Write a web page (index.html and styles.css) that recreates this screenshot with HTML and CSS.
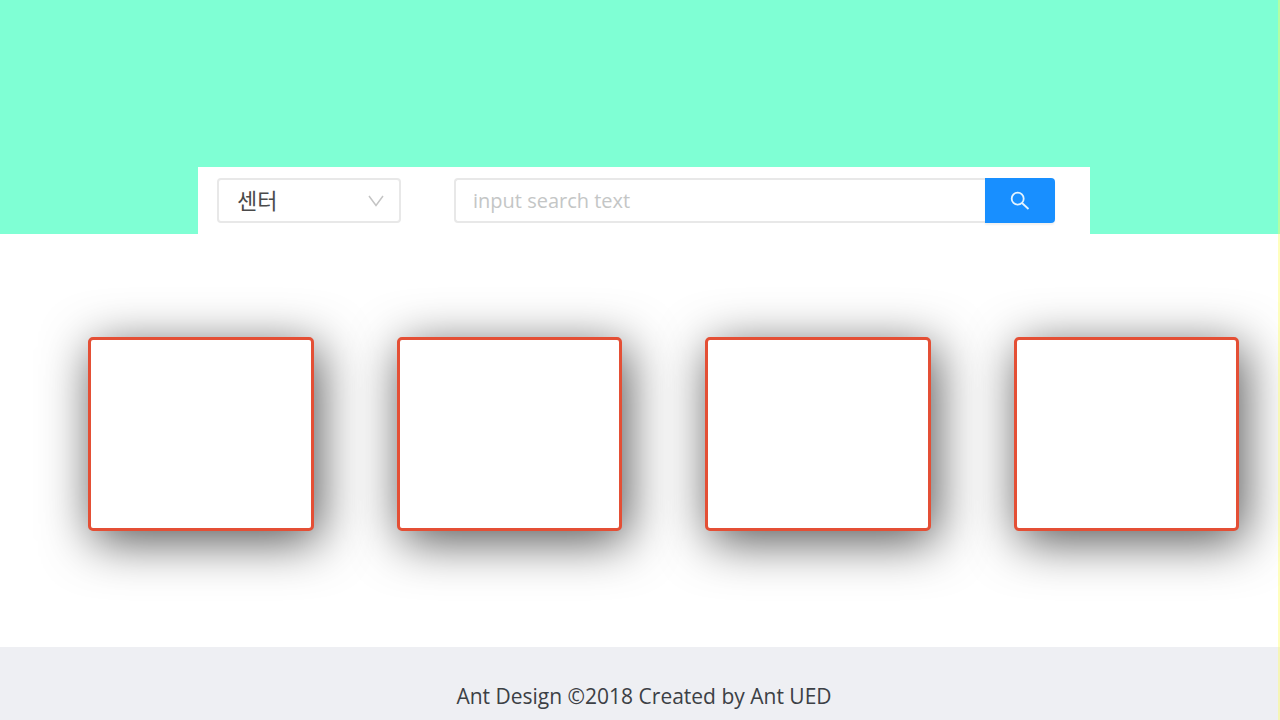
FILE: index.html
```html
<!DOCTYPE html>
<html lang="ko">
<head>
<meta charset="utf-8">
<meta name="viewport" content="width=device-width, initial-scale=1">
<title>센터</title>
<link rel="stylesheet" href="styles.css">
</head>
<body>
<div class="page">
  <header class="banner">
    <form class="search-bar" role="search">
      <div class="picker">
        <select class="picker-select" aria-label="센터">
          <option>센터</option>
        </select>
        <svg class="picker-arrow" viewBox="0 0 16 12" aria-hidden="true"><path d="M1 1 8 10.500 15 1"/></svg>
      </div>
      <div class="search">
        <input class="search-input" type="text" placeholder="input search text" aria-label="input search text">
        <button class="search-button" type="button" aria-label="Search">
          <svg class="search-icon" viewBox="0 0 20 20" aria-hidden="true"><circle cx="7.700" cy="7.700" r="6"/><path d="m12 12 6.500 6"/></svg>
        </button>
      </div>
    </form>
  </header>
  <main class="cards">
    <article class="card"></article>
    <article class="card"></article>
    <article class="card"></article>
    <article class="card"></article>
  </main>
  <footer class="footer">Ant Design ©2018 Created by Ant UED</footer>
</div>
<div class="edge"></div>
</body>
</html>
```
FILE: styles.css
```css
* {
  box-sizing: border-box;
}

body {
  margin: 0;
  background: #fff;
  color: #3c4045;
  font-family: "Open Sans", "Noto Sans CJK KR", sans-serif;
  font-size: 20px;
  line-height: 28px;
}

.page {
  display: flex;
  flex-direction: column;
  min-height: 100vh;
  overflow: hidden;
}

.banner {
  display: flex;
  padding: 167px 190px 0 198px;
  background: #7fffd4;
}

.search-bar {
  display: flex;
  flex: 1;
  gap: 53px;
  height: 67px;
  padding: 11px 35px 11px 19px;
  background: #fff;
}

.picker {
  position: relative;
  width: 184px;
}

.picker-select {
  width: 100%;
  height: 100%;
  padding: 0 40px 4px 18px;
  border: 2px solid #e8e8e8;
  border-radius: 4px;
  appearance: none;
  background: #fff;
  color: #4a4a4a;
  font-family: "Noto Sans CJK KR", sans-serif;
  font-size: 22px;
  font-weight: 400;
}

.picker-arrow {
  position: absolute;
  top: 17px;
  right: 17px;
  width: 16px;
  height: 12px;
  fill: none;
  stroke: #c4c4c4;
  stroke-width: 1.500;
  pointer-events: none;
}

.search {
  display: flex;
  flex: 1;
}

.search-input {
  flex: 1;
  min-width: 0;
  padding: 0 17px;
  border: 2px solid #e8e8e8;
  border-right: 0;
  border-radius: 4px 0 0 4px;
  color: #3c4045;
  font: inherit;
}

.search-input::placeholder {
  color: #c4c6c6;
}

.search-button {
  display: flex;
  align-items: center;
  justify-content: center;
  width: 70px;
  padding: 0;
  border: 0;
  border-radius: 0 4px 4px 0;
  background: #188fff;
  box-shadow: 0 2px 2px rgba(0, 0, 0, 0.06);
}

.search-icon {
  width: 20px;
  height: 20px;
  fill: none;
  stroke: #e4f4ff;
  stroke-width: 1.800;
}

.cards {
  display: grid;
  grid-template-columns: repeat(4, 1fr);
  gap: 83px;
  padding: 103px 41px 116px 88px;
}

.card {
  height: 194px;
  border: 3px solid #e44f35;
  border-radius: 5px;
  background: #fff;
  box-shadow: 5px 10px 50px rgba(0, 0, 0, 0.68);
}

.footer {
  flex: 1;
  padding: 35px 24px 10px 32px;
  background: #eeeff3;
  font-size: 21px;
  text-align: center;
}

.edge {
  position: fixed;
  top: 0;
  right: 0;
  bottom: 0;
  width: 2px;
  background: rgba(255, 255, 90, 0.4);
}
```
